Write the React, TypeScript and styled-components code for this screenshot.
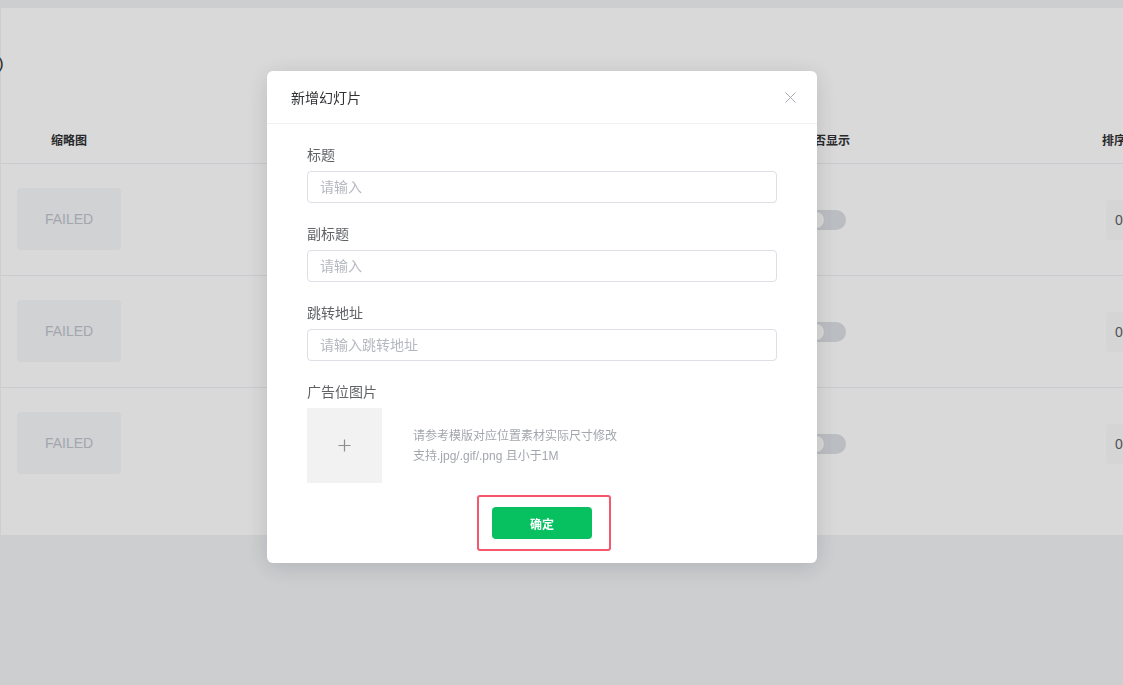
import styled, { createGlobalStyle } from 'styled-components';

const GlobalStyle = createGlobalStyle`
    html, body {
        margin: 0;
        padding: 0;
        overflow: hidden;
    }
    body {
        font-family: "Liberation Sans", "Noto Sans CJK SC", sans-serif;
        background: #f0f2f5;
    }
    * {
        box-sizing: border-box;
    }
`;

const rows = [1, 2, 3];

function CloseIcon() {
    return (
        <svg width="11" height="11" viewBox="0 0 11 11">
            <path d="M0.5 0.5 L10.5 10.5 M10.5 0.5 L0.5 10.5" stroke="#a8abb2" strokeWidth="1" fill="none" />
        </svg>
    );
}

function PlusIcon() {
    return (
        <svg width="13" height="13" viewBox="0 0 13 13">
            <path d="M6.5 0.5 V12.5 M0.5 6.5 H12.5" stroke="#8c8c8c" strokeWidth="1.2" fill="none" />
        </svg>
    );
}

function Field({ label, placeholder }: { label: string; placeholder: string }) {
    return (
        <FormItem>
            <Label>{label}</Label>
            <Input placeholder={placeholder} />
        </FormItem>
    );
}

export default function App() {
    return (
        <Page>
            <GlobalStyle />
            <Panel>
                <Toolbar>
                    <ToolbarText>)</ToolbarText>
                </Toolbar>
                <Table>
                    <HeadCell>缩略图</HeadCell>
                    <HeadCell />
                    <HeadCell>是否显示</HeadCell>
                    <HeadCell />
                    <HeadCell $align="left">排序</HeadCell>
                    {rows.map((r, i) => (
                        <Row key={r} $last={i === rows.length - 1}>
                            <Cell>
                                <Thumb>FAILED</Thumb>
                            </Cell>
                            <Cell />
                            <Cell>
                                <Switch />
                            </Cell>
                            <Cell />
                            <Cell $align="left">
                                <SortBox>0</SortBox>
                            </Cell>
                        </Row>
                    ))}
                </Table>
            </Panel>

            <Mask>
                <Dialog>
                    <DialogHeader>
                        <DialogTitle>新增幻灯片</DialogTitle>
                        <CloseButton>
                            <CloseIcon />
                        </CloseButton>
                    </DialogHeader>
                    <DialogBody>
                        <Field label="标题" placeholder="请输入" />
                        <Field label="副标题" placeholder="请输入" />
                        <Field label="跳转地址" placeholder="请输入跳转地址" />
                        <Label>广告位图片</Label>
                        <UploadRow>
                            <UploadBox>
                                <PlusIcon />
                            </UploadBox>
                            <Hint>
                                <div>请参考模版对应位置素材实际尺寸修改</div>
                                <div>支持.jpg/.gif/.png 且小于1M</div>
                            </Hint>
                        </UploadRow>
                        <Footer>
                            <Highlight>
                                <SubmitButton>确定</SubmitButton>
                            </Highlight>
                        </Footer>
                    </DialogBody>
                </Dialog>
            </Mask>
        </Page>
    );
}

const Page = styled.div`
    width: 1123px;
    height: 685px;
    padding-top: 8px;
    overflow: hidden;
    background: #f0f2f5;
`;

const Panel = styled.div`
    margin-left: 1px;
    width: 1400px;
    height: 527px;
    background: #ffffff;
`;

const Toolbar = styled.div`
    height: 107px;
    padding-top: 46px;
`;

const ToolbarText = styled.span`
    display: block;
    margin-left: -3px;
    font-size: 17px;
    line-height: 20px;
    color: #303133;
`;

const Table = styled.div`
    display: grid;
    grid-template-columns: 136px 623px 132px 198px 200px;
`;

const HeadCell = styled.div<{ $align?: string }>`
    height: 49px;
    display: flex;
    align-items: center;
    justify-content: ${(p) => (p.$align === 'left' ? 'flex-start' : 'center')};
    padding-left: ${(p) => (p.$align === 'left' ? '12px' : '0')};
    font-size: 12px;
    font-weight: bold;
    color: #303133;
    border-bottom: 1px solid #ebeef5;
`;

const Row = styled.div<{ $last?: boolean }>`
    display: contents;

    & > div {
        border-bottom: ${(p) => (p.$last ? 'none' : '1px solid #ebeef5')};
    }
`;

const Cell = styled.div<{ $align?: string }>`
    height: 112px;
    display: flex;
    align-items: center;
    justify-content: ${(p) => (p.$align === 'left' ? 'flex-start' : 'center')};
    padding-left: ${(p) => (p.$align === 'left' ? '16px' : '0')};
`;

const Thumb = styled.div`
    width: 104px;
    height: 62px;
    margin-top: -2px;
    border-radius: 4px;
    background: #f5f7fa;
    color: #c0c4cc;
    font-size: 14px;
    display: flex;
    align-items: center;
    justify-content: center;
`;

const Switch = styled.span`
    position: relative;
    display: inline-block;
    width: 40px;
    height: 20px;
    border-radius: 10px;
    background: #dcdfe6;

    &::after {
        content: '';
        position: absolute;
        top: 2px;
        left: 2px;
        width: 16px;
        height: 16px;
        border-radius: 50%;
        background: #ffffff;
    }
`;

const SortBox = styled.div`
    width: 100px;
    height: 40px;
    padding-left: 9px;
    display: flex;
    align-items: center;
    background: #fbfbfb;
    border-radius: 4px;
    font-size: 14px;
    color: #606266;
`;

const Mask = styled.div`
    position: fixed;
    inset: 0;
    background: rgba(0, 0, 0, 0.15);
`;

const Dialog = styled.div`
    width: 550px;
    margin: 71px 0 0 267px;
    background: #ffffff;
    border-radius: 6px;
    box-shadow: 0 4px 24px rgba(0, 0, 0, 0.14);
`;

const DialogHeader = styled.div`
    height: 53px;
    padding: 0 19px 0 24px;
    display: flex;
    align-items: center;
    justify-content: space-between;
    border-bottom: 1px solid #f0f0f0;
`;

const DialogTitle = styled.span`
    font-size: 14px;
    color: #303133;
`;

const CloseButton = styled.span`
    display: flex;
    width: 16px;
    height: 16px;
    align-items: center;
    justify-content: center;
`;

const DialogBody = styled.div`
    padding: 21px 40px 12px;
`;

const FormItem = styled.div`
    margin-bottom: 21px;
`;

const Label = styled.div`
    font-size: 14px;
    line-height: 20px;
    color: #606266;
    margin-bottom: 6px;
`;

const Input = styled.input`
    display: block;
    width: 100%;
    height: 32px;
    padding: 0 12px;
    border: 1px solid #dcdfe6;
    border-radius: 4px;
    font-family: inherit;
    font-size: 14px;
    color: #606266;
    outline: none;

    &::placeholder {
        color: #b5b8bf;
    }
`;

const UploadRow = styled.div`
    display: flex;
    align-items: center;
    gap: 31px;
`;

const UploadBox = styled.div`
    width: 75px;
    height: 75px;
    background: #f2f2f2;
    display: flex;
    align-items: center;
    justify-content: center;
`;

const Hint = styled.div`
    font-size: 12px;
    line-height: 20px;
    color: #a3a6ad;
`;

const Footer = styled.div`
    display: flex;
    justify-content: center;
    margin-top: 12px;
    padding-left: 4px;
`;

const Highlight = styled.div`
    padding: 10px 17px 10px 13px;
    border: 2px solid #f5576c;
    border-radius: 3px;
`;

const SubmitButton = styled.button`
    width: 100px;
    height: 32px;
    border: none;
    border-radius: 4px;
    background: #07c160;
    color: #ffffff;
    font-family: inherit;
    font-size: 12px;
    font-weight: bold;
`;
